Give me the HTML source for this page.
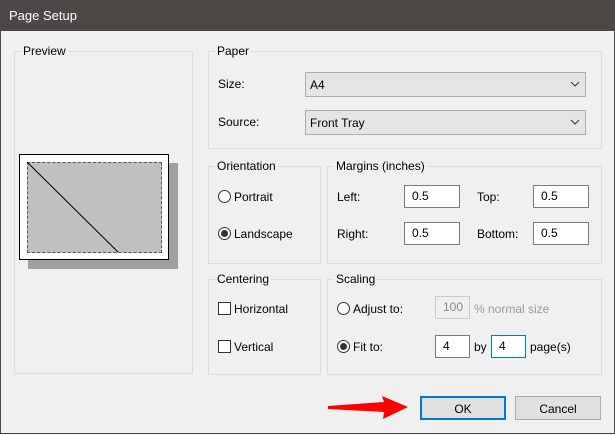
<!DOCTYPE html><html><head><style>
body{margin:0;width:615px;height:435px;background:#f0f0f0;font-family:"Liberation Sans",sans-serif;font-size:12px;color:#000;position:relative;overflow:hidden}
.win{position:absolute;left:0;top:0;width:613px;height:433px;border:1px solid #4b4845;border-top:none}
.title{position:absolute;left:0;top:0;width:615px;height:31px;background:#4b4845;color:#fff;font-size:13px}
.title span{position:absolute;left:9px;top:8px}
.g{position:absolute;border:1px solid #dcdcdc}
.gl{position:absolute;background:#f0f0f0;padding:0 2px;top:-8px;left:6px}
.t{position:absolute;white-space:nowrap}
.in{position:absolute;background:#fff;border:1px solid #7a7a7a;box-sizing:border-box;padding:3px 0 0 7px}
.sel{position:absolute;background:#e5e5e5;border:1px solid #adadad;box-sizing:border-box;padding:5px 0 0 4px}
.rad{position:absolute;width:11px;height:11px;border:1px solid #333;border-radius:50%;background:#fff}
.rad.on::after{content:"";position:absolute;left:2px;top:2px;width:7px;height:7px;border-radius:50%;background:#333}
.cb{position:absolute;width:11px;height:11px;border:1px solid #333;background:#fff}
.btn{position:absolute;background:#e1e1e1;border:1px solid #adadad;box-sizing:border-box;text-align:center;padding-top:5px}
</style></head><body>
<div class="win"></div>
<div class="title"><span>Page Setup</span></div>

<div class="g" style="left:14px;top:51px;width:177px;height:321px"><span class="gl">Preview</span></div>
<div style="position:absolute;left:28px;top:163px;width:150px;height:106px;background:#a0a0a0"></div>
<div style="position:absolute;left:19px;top:154px;width:148px;height:104px;background:#fff;border:1px solid #000"></div>
<div style="position:absolute;left:27px;top:162px;width:133px;height:89px;background:#c0c0c0;border:1px dashed #555"></div>
<svg style="position:absolute;left:0;top:0" width="615" height="435"><line x1="27" y1="162" x2="118" y2="252" stroke="#000" stroke-width="1"/>
<path d="M328 406 L384 402 L382 396 L408 407 L383 419 L384 412 L328 409 Z" fill="#ff0000"/></svg>

<div class="g" style="left:208px;top:51px;width:392px;height:96px"><span class="gl">Paper</span></div>
<span class="t" style="left:218px;top:77px">Size:</span>
<div class="sel" style="left:305px;top:72px;width:281px;height:25px">A4</div>
<span class="t" style="left:218px;top:115px">Source:</span>
<div class="sel" style="left:305px;top:110px;width:281px;height:25px">Front Tray</div>
<svg style="position:absolute;left:570px;top:80px" width="10" height="48"><path d="M1 2 L5 6 L9 2 M1 40 L5 44 L9 40" stroke="#333" fill="none"/></svg>

<div class="g" style="left:208px;top:166px;width:111px;height:96px"><span class="gl">Orientation</span></div>
<div class="rad" style="left:218px;top:190px"></div><span class="t" style="left:234px;top:190px">Portrait</span>
<div class="rad on" style="left:218px;top:227px"></div><span class="t" style="left:234px;top:227px">Landscape</span>

<div class="g" style="left:327px;top:166px;width:273px;height:96px"><span class="gl">Margins (inches)</span></div>
<span class="t" style="left:337px;top:190px">Left:</span><div class="in" style="left:404px;top:185px;width:56px;height:23px">0.5</div>
<span class="t" style="left:477px;top:190px">Top:</span><div class="in" style="left:533px;top:185px;width:56px;height:23px">0.5</div>
<span class="t" style="left:337px;top:227px">Right:</span><div class="in" style="left:404px;top:222px;width:56px;height:23px">0.5</div>
<span class="t" style="left:477px;top:227px">Bottom:</span><div class="in" style="left:533px;top:222px;width:56px;height:23px">0.5</div>

<div class="g" style="left:208px;top:279px;width:111px;height:94px"><span class="gl">Centering</span></div>
<div class="cb" style="left:218px;top:302px"></div><span class="t" style="left:234px;top:302px">Horizontal</span>
<div class="cb" style="left:218px;top:340px"></div><span class="t" style="left:234px;top:340px">Vertical</span>

<div class="g" style="left:327px;top:279px;width:273px;height:94px"><span class="gl">Scaling</span></div>
<div class="rad" style="left:337px;top:302px"></div><span class="t" style="left:353px;top:302px">Adjust to:</span>
<div class="in" style="left:435px;top:296px;width:35px;height:23px;background:#f0f0f0;border-color:#ccc;color:#888">100</div>
<span class="t" style="left:474px;top:302px;color:#999">% normal size</span>
<div class="rad on" style="left:337px;top:340px"></div><span class="t" style="left:353px;top:340px">Fit to:</span>
<div class="in" style="left:435px;top:335px;width:35px;height:23px">4</div>
<span class="t" style="left:474px;top:340px">by</span>
<div class="in" style="left:491px;top:335px;width:35px;height:23px;border-color:#0078d7">4</div>
<span class="t" style="left:530px;top:340px">page(s)</span>

<div class="btn" style="left:420px;top:396px;width:86px;height:24px;border:2px solid #0078d7;padding-top:4px">OK</div>
<div class="btn" style="left:515px;top:396px;width:86px;height:24px">Cancel</div>
</body></html>
